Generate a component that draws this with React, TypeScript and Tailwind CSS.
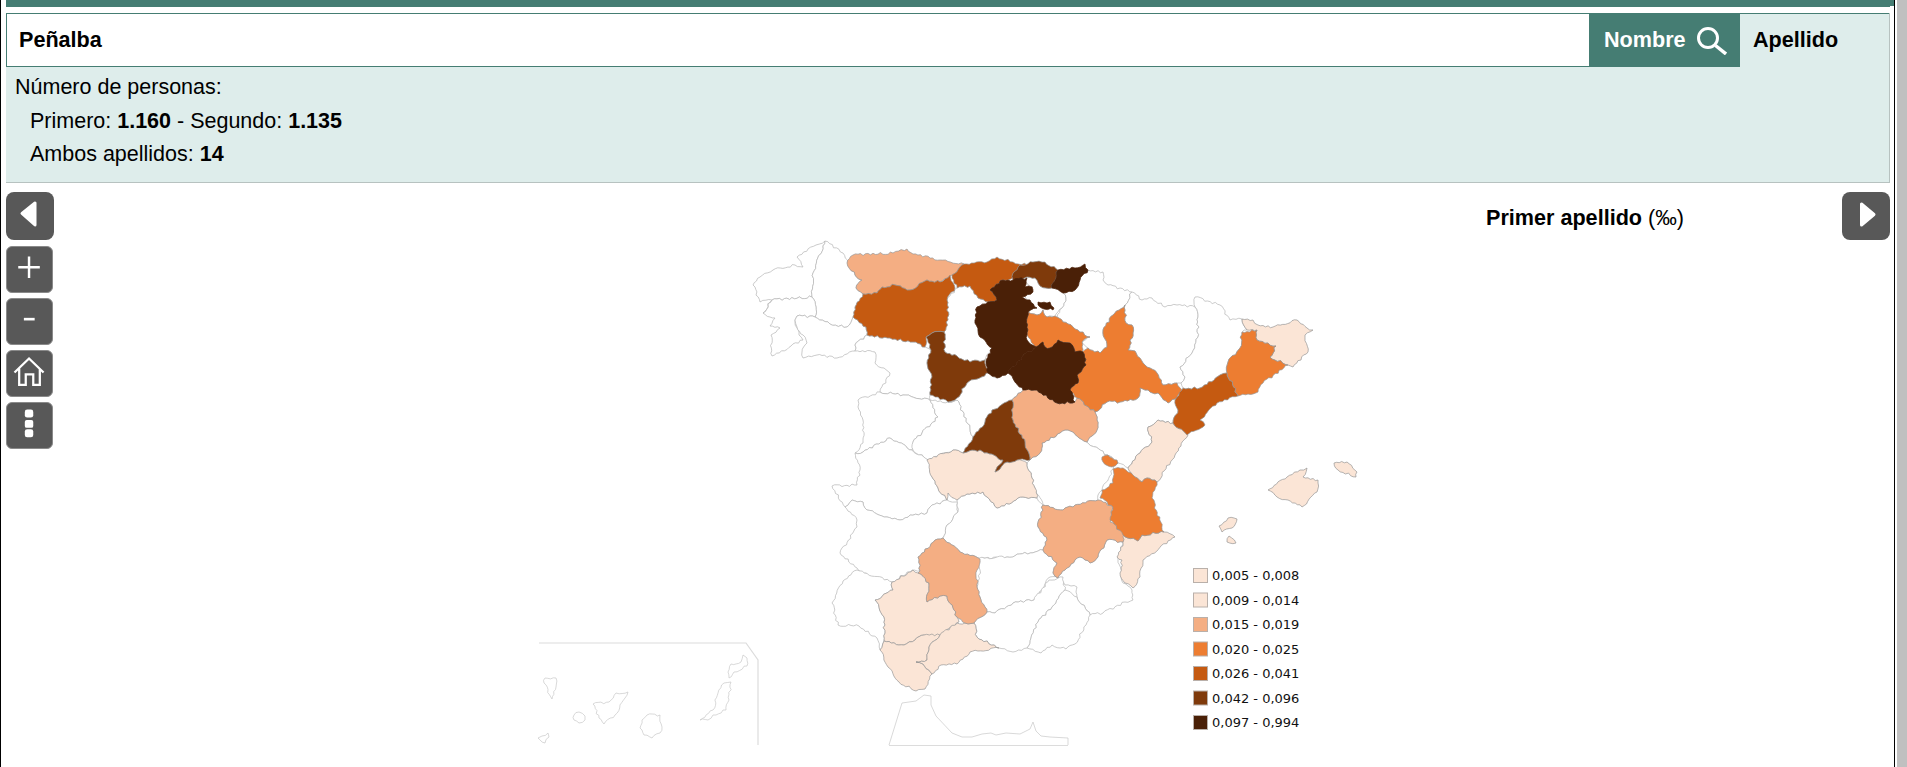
const C1 = "#fbe5d6";
const C3 = "#f4ae83";
const C4 = "#ed7d31";
const C5 = "#c55a11";
const C6 = "#7f3a0b";
const C7 = "#4a2007";
const W = "#ffffff";

const legend = [
  { color: "#fbe5d6", label: "0,005 - 0,008" },
  { color: "#fbe5d6", label: "0,009 - 0,014" },
  { color: C3, label: "0,015 - 0,019" },
  { color: C4, label: "0,020 - 0,025" },
  { color: C5, label: "0,026 - 0,041" },
  { color: C6, label: "0,042 - 0,096" },
  { color: C7, label: "0,097 - 0,994" },
];

// Provinces, traced in page pixels. White ones go first so coloured borders stay on top.
const provinces: [string, string][] = [
  [W, "825,241 816,245 797,257 803,267 795,265 773,270 760,277 753,285 760,302 772,300 763,313 772,300 812,297 813,273"],
  [W, "825,241 843,253 848,263 855,275 862,280 856,288 863,294 855,307 853,317 847,327 830,324 815,317 816,307 812,297 813,273"],
  [W, "812,297 816,307 815,317 797,316 795,320 799,335 803,340 772,356 771,335 780,328 770,326 775,318 770,317 763,313 772,300"],
  [W, "797,316 815,317 830,324 847,327 853,317 866,327 867,335 855,345 855,351 837,358 817,355 803,358 802,352 807,343 803,335 797,327 795,320"],
  [W, "867,335 890,338 913,342 925,347 931,350 927,363 932,377 930,395 930,400 903,395 880,392 890,373 875,363 875,352 855,351 855,345"],
  [W, "858,400 880,392 903,395 930,400 938,417 922,433 913,442 912,450 890,438 863,452 855,453 863,443 863,420 858,407"],
  [W, "957,288 970,286 978,298 988,302 977,307 975,323 980,337 992,348 985,360 970,362 957,356 945,352 944,332 948,320 947,300"],
  [W, "930,400 948,402 957,400 970,428 973,437 963,453 953,450 928,460 913,450 913,442 922,433 938,417"],
  [W, "957,398 967,383 989,373 997,378 1008,373 1023,390 1012,400 992,410 985,422 973,437 970,428 957,400 948,402"],
  [W, "1020,279 1027,277 1035,278 1040,286 1052,288 1063,293 1066,298 1062,308 1055,317 1047,317 1043,310 1037,315 1028,312 1037,308 1030,300 1025,297 1033,287"],
  [W, "1088,270 1103,272 1103,280 1108,285 1132,292 1125,305 1113,315 1103,330 1107,347 1100,353 1088,348 1082,343 1090,337 1073,327 1063,322 1057,317 1062,308 1066,298 1063,293 1075,290 1080,280"],
  [W, "1132,292 1142,300 1152,298 1165,307 1177,305 1195,307 1198,317 1198,337 1192,353 1180,367 1185,377 1181,383 1177,383 1163,385 1157,373 1143,363 1135,351 1128,350 1133,333 1132,325 1126,323 1125,305"],
  [W, "1195,297 1220,305 1230,320 1242,319 1247,330 1242,332 1240,348 1228,362 1227,373 1220,375 1200,388 1183,388 1181,383 1185,377 1180,367 1192,353 1198,337 1198,317 1195,307"],
  [W, "1095,412 1107,402 1120,402 1138,398 1140,388 1148,390 1160,395 1168,403 1177,397 1178,410 1173,423 1158,420 1148,427 1152,442 1140,453 1128,468 1118,463 1107,455 1087,442 1097,430 1097,420"],
  [W, "1027,463 1030,460 1033,457 1040,453 1042,443 1060,433 1068,430 1087,442 1107,455 1118,463 1113,469 1102,490 1098,495 1098,500 1075,505 1063,510 1043,505 1035,488"],
  [W, "855,453 863,452 890,438 912,450 928,460 932,477 938,488 947,500 930,507 927,513 910,515 900,520 887,517 867,510 863,502 852,500 845,507 832,486 857,485 860,470"],
  [W, "845,507 852,500 863,502 867,510 887,517 900,520 910,515 927,513 930,507 947,500 958,502 958,512 947,525 943,538 935,540 918,557 920,571 912,570 892,582 870,577 857,568 840,553 857,527 857,520"],
  [W, "957,500 967,494 983,492 987,497 997,508 1023,497 1037,498 1043,505 1038,527 1047,540 1043,550 1007,557 980,559 960,552 943,538 947,525 958,512"],
  [W, "1058,578 1065,570 1080,557 1090,563 1098,557 1107,540 1123,542 1118,557 1123,583 1132,590 1133,600 1125,602 1103,613 1090,615 1077,597 1077,587 1065,585"],
  [W, "977,558 1007,557 1043,550 1057,563 1053,573 1058,578 1050,577 1034,600 1013,603 995,613 987,612 980,597 977,587 980,570"],
  [W, "857,570 892,582 893,590 875,600 884,617 884,641 880,650 877,638 859,626 838,625 832,603 843,581"],
  [W, "987,612 995,613 1013,603 1034,600 1049,580 1063,577 1065,590 1052,607 1038,622 1031,638 1027,648 1013,652 999,648 977,637 974,623"],
  [W, "1065,590 1077,597 1090,615 1086,625 1075,644 1066,649 1052,645 1041,653 1027,648 1031,638 1038,622 1052,607"],
  [C1, "1242,319 1253,320 1258,325 1273,327 1297,320 1307,328 1313,330 1305,335 1308,352 1293,367 1288,365 1270,357 1276,346 1257,340 1257,330 1247,330"],
  [C1, "1148,427 1158,420 1173,423 1188,435 1175,455 1157,482 1147,478 1142,482 1135,477 1128,468 1140,453 1152,442"],
  [C1, "1123,535 1138,541 1142,535 1164,532 1175,537 1143,560 1140,577 1133,588 1125,583 1120,573 1122,560 1117,557 1123,543"],
  [C1, "927,460 953,450 963,453 967,452 980,450 1003,460 995,472 1007,462 1017,460 1027,463 1035,488 1037,498 1023,497 997,508 987,497 983,492 967,494 957,500 948,493 947,500 938,488 932,477"],
  [C1, "875,600 893,590 892,582 913,570 918,573 929,583 927,602 940,596 947,596 957,617 959,622 945,632 938,638 924,635 915,640 904,645 884,641 884,617"],
  [C1, "884,641 904,645 915,640 924,635 940,635 929,647 927,660 916,662 923,664 932,674 925,689 916,691 899,682 888,667 880,650"],
  [C1, "940,635 957,623 965,623 974,623 977,637 999,648 970,652 957,664 941,665 932,674 923,664 916,662 927,660 929,647"],
  [C1, "1268,490 1287,477 1300,470 1307,468 1303,477 1318,480 1317,492 1302,507 1288,500 1277,497"],
  [C1, "1334,463 1347,462 1357,472 1356,477 1338,470"],
  [C1, "1219,526 1228,518 1237,519 1232,528 1222,532"],
  [C1, "1227,542 1229,536 1236,543"],
  [C3, "853,255 893,253 907,249 913,254 940,260 964,264 952,275 940,282 927,280 910,290 895,285 882,287 877,293 863,294 856,288 862,280 855,275 847,263"],
  [C3, "1012,400 1023,390 1037,390 1057,403 1075,402 1077,398 1095,412 1097,420 1097,430 1087,442 1068,430 1060,433 1042,443 1040,453 1033,457 1030,460 1025,442 1013,420"],
  [C3, "1043,505 1063,510 1075,505 1098,500 1113,507 1110,522 1123,532 1123,542 1107,540 1098,557 1090,563 1080,557 1065,570 1058,578 1053,573 1057,563 1043,550 1047,540 1038,527"],
  [C3, "918,557 935,540 943,538 960,552 980,559 977,570 977,587 980,597 987,612 974,623 965,623 957,617 947,596 940,596 927,602 929,583 918,573 920,571"],
  [C4, "1028,312 1037,315 1043,310 1047,317 1057,317 1063,322 1073,327 1090,337 1082,342 1082,352 1075,352 1070,343 1058,340 1050,348 1045,347 1043,342 1035,347 1027,335"],
  [C4, "1125,305 1126,323 1132,325 1133,333 1128,350 1135,351 1143,363 1157,373 1163,385 1177,383 1182,390 1177,397 1168,403 1160,395 1148,390 1140,388 1138,398 1120,402 1107,402 1095,412 1077,398 1070,390 1078,383 1077,375 1086,365 1083,352 1082,352 1088,348 1100,353 1107,347 1103,330 1113,315"],
  [C4, "1242,332 1257,330 1257,340 1276,346 1270,357 1288,365 1263,383 1258,392 1238,396 1227,373 1228,362 1240,348"],
  [C4, "1113,469 1123,468 1128,472 1135,477 1142,482 1147,478 1157,482 1152,498 1164,532 1142,535 1138,541 1123,535 1110,520 1113,507 1100,498 1102,490 1113,483"],
  [C4, "1102,457 1108,455 1117,460 1118,463 1112,467 1103,462"],
  [C5, "863,294 877,293 882,287 895,285 910,290 927,280 940,282 950,275 955,288 947,300 948,320 944,332 932,333 926,337 925,347 913,342 890,338 867,335 866,327 853,317 855,307"],
  [C5, "952,275 964,264 987,262 997,257 1013,262 1027,265 1017,270 1013,278 1003,280 990,290 997,300 988,302 978,298 970,286 957,288"],
  [C5, "1227,373 1238,396 1217,403 1200,420 1205,425 1187,435 1173,423 1178,410 1175,400 1183,388 1200,388 1220,375"],
  [C6, "926,337 932,333 944,332 945,352 957,356 970,362 985,360 989,373 967,383 957,398 948,402 930,395 932,377 927,363 931,350"],
  [C6, "1012,400 1013,420 1025,442 1030,460 1017,460 1007,462 995,472 1003,460 980,450 967,452 963,453 973,437 985,422 992,410"],
  [C6, "1013,273 1020,265 1033,262 1045,262 1058,270 1053,283 1052,288 1040,286 1035,278 1027,277 1020,279 1013,280"],
  [C7, "1058,270 1075,268 1085,264 1088,270 1080,280 1075,290 1063,293 1052,288 1053,283"],
  [C7, "1003,280 1013,280 1027,278 1025,287 1032,287 1033,292 1022,297 1030,300 1037,308 1028,312 1027,335 1027,340 1036,347 1022,357 1008,373 997,378 988,373 986,362 992,348 980,337 975,323 977,307 988,302 997,300 990,290"],
  [C7, "1036,347 1043,342 1045,347 1050,348 1058,340 1070,343 1075,352 1083,352 1086,365 1077,375 1078,383 1070,390 1075,402 1057,403 1037,390 1023,390 1008,373 1022,357"],
  [C7, "1038,302 1050,302 1054,308 1053,310 1040,307"],
];

// Canary Islands, no fill
const islands = [
  "743,655 747,658 747,666 734,672 729,678 728,672 731,664 741,662",
  "724,683 731,682 729,700 726,710 713,715 708,720 700,720 713,710 718,693",
  "647,715 660,715 662,727 660,733 652,738 644,735 640,728 642,720",
  "593,704 609,702 616,693 628,692 625,698 615,715 604,724 599,718",
  "574,715 579,712 585,716 585,720 579,723 574,720",
  "545,678 556,678 556,687 552,699 544,683",
  "548,733 549,737 545,743 538,738 542,736",
];

// breaks each edge into a jagged line; the same edge always gets the same jags
function jag(points: string) {
  const pts = points.split(" ").map((p) => p.split(",").map(Number));
  let d = "";
  pts.forEach((a, i) => {
    const b = pts[(i + 1) % pts.length];
    d += `${i === 0 ? "M" : "L"}${a[0]} ${a[1]}`;
    const len = Math.hypot(b[0] - a[0], b[1] - a[1]);
    const n = Math.floor(len / 2.5);
    const seed = (a[0] + b[0]) * 13 + (a[1] + b[1]) * 7;
    const swap = a[0] > b[0] || (a[0] === b[0] && a[1] > b[1]);
    for (let k = 1; k < n; k++) {
      const t = k / n;
      const u = swap ? n - k : k;
      const off = Math.sin(seed + u * u * 2.3) * 1.1 * (swap ? -1 : 1);
      const x = a[0] + (b[0] - a[0]) * t - ((b[1] - a[1]) / len) * off;
      const y = a[1] + (b[1] - a[1]) * t + ((b[0] - a[0]) / len) * off;
      d += `L${x.toFixed(1)} ${y.toFixed(1)}`;
    }
  });
  return d + "Z";
}

function SpainMap() {
  return (
    <svg viewBox="530 183 900 584" className="w-[900px] h-[584px] shrink-0 ml-[476px]">
      {provinces.map(([fill, pts], i) => (
        <path
          key={i}
          d={jag(pts)}
          fill={fill}
          stroke={fill === C7 ? "#4a2007" : fill === W ? "#b4b4b4" : "#969696"}
          strokeWidth="0.7"
          strokeLinejoin="round"
        />
      ))}
      {islands.map((pts, i) => (
        <path key={i} d={jag(pts)} fill="#fff" stroke="#c8c8c8" strokeWidth="0.7" />
      ))}
      <path d="M539 643H746L758 660V745" fill="none" stroke="#dcdcdc" strokeWidth="1.2" />
      {/* Ceuta and Melilla box */}
      <path
        d="M889 745L902 703L916 701L924 695L931 696L931 705L936 716L952 733L962 737L972 737L982 734L991 733L996 735L1006 733L1020 734L1030 729L1033 722L1036 731L1041 736L1050 737L1068 738V745"
        fill="none"
        stroke="#c8c8c8"
        strokeWidth="0.7"
      />
      <path d="M889 745.5H1068" stroke="#dcdcdc" strokeWidth="1.2" />
      {legend.map((item, i) => (
        <g key={item.label}>
          <rect
            x="1193.5"
            y={568.5 + i * 24.5}
            width="14"
            height="14"
            fill={item.color}
            stroke="#b9b0aa"
            strokeWidth="1"
          />
          <text x="1212" y={580 + i * 24.5} fontSize="13" fill="#111" className="font-['DejaVu_Sans',sans-serif]">
            {item.label}
          </text>
        </g>
      ))}
    </svg>
  );
}

function ToolButton({ children, big }: { children: React.ReactNode; big?: boolean }) {
  return (
    <button
      className={
        big
          ? "w-[48px] h-[48px] shrink-0 rounded-lg bg-[#585858] block"
          : "w-[47px] h-[47px] shrink-0 rounded-md bg-[#585858] border border-[#8a8a8a] block"
      }
    >
      {children}
    </button>
  );
}

function Glyph({ children }: { children: React.ReactNode }) {
  return (
    <svg viewBox="0 0 48 48" className="w-full h-full block">
      {children}
    </svg>
  );
}

export default function App() {
  return (
    <div className="h-[767px] w-full flex overflow-hidden bg-white font-['Liberation_Sans',Arial,sans-serif] text-black">
      <div className="w-px bg-black shrink-0" />
      <div className="flex-1 min-w-0 pl-[5px]">
        <div className="h-[6px] bg-[#457d73]" />
        <div className="h-px bg-[#457d73] mr-[4px]" />
        <div className="mt-[6px] mr-[4px] h-[170px] bg-[#deedeb] border-r border-b border-[#b7c2c0]">
          <div className="flex h-[54px]">
            <div className="flex-1 flex items-center pl-[12px] bg-white border border-[#457d73] text-[21.6px] font-bold">
              Peñalba
            </div>
            <div className="w-[150px] flex items-center pl-[14px] bg-[#457d73] text-white text-[21.6px] font-bold">
              Nombre
              <svg viewBox="0 0 32 30" className="w-[32px] h-[30px] ml-[9px] shrink-0" fill="none" stroke="#fff">
                <circle cx="13" cy="13" r="9.5" strokeWidth="3" />
                <path d="M20.5 20.5L31 29" strokeWidth="3.4" />
              </svg>
            </div>
            <div className="w-[149px] flex items-center pl-[13px] border-t border-[#457d73] text-[21.6px] font-bold">
              Apellido
            </div>
          </div>
          <div className="pl-[9px] pt-[4px] text-[21.5px] leading-[33.5px]">
            <p>Número de personas:</p>
            <p className="pl-[15px]">
              Primero: <b>1.160</b> - Segundo: <b>1.135</b>
            </p>
            <p className="pl-[15px]">
              Ambos apellidos: <b>14</b>
            </p>
          </div>
        </div>
        <div className="flex mr-[4px]">
          <div className="w-[48px] shrink-0 pt-[9px] flex flex-col gap-[5px]">
            <div className="mb-px">
              <ToolButton big>
                <Glyph>
                  <polygon points="16,21.5 29,11 29,33" fill="#fff" stroke="#fff" strokeWidth="3" strokeLinejoin="round" />
                </Glyph>
              </ToolButton>
            </div>
            <ToolButton>
              <Glyph>
                <path d="M12 21.5H35M23.5 10V33" stroke="#fff" strokeWidth="2.6" fill="none" />
              </Glyph>
            </ToolButton>
            <ToolButton>
              <Glyph>
                <path d="M18 21.5H29.5" stroke="#fff" strokeWidth="2.8" fill="none" />
              </Glyph>
            </ToolButton>
            <ToolButton>
              <Glyph>
                <path
                  d="M8 23L23.5 8L39 23M13 19V36H20V25H28V36H35V19"
                  stroke="#fff"
                  strokeWidth="2.4"
                  fill="none"
                  strokeLinejoin="miter"
                />
              </Glyph>
            </ToolButton>
            <ToolButton>
              <Glyph>
                <rect x="19" y="7" width="9" height="8.5" rx="2.5" fill="#fff" />
                <rect x="19" y="18" width="9" height="8.5" rx="2" fill="#fff" />
                <rect x="19" y="28" width="9" height="8.5" rx="2.5" fill="#fff" />
              </Glyph>
            </ToolButton>
          </div>
          <SpainMap />
          <div className="flex-1 flex justify-between pt-[9px]">
            <div className="ml-[56px] pt-[11px] text-[21.6px] leading-[30px] font-bold">
              Primer apellido <span className="font-normal">(‰)</span>
            </div>
            <ToolButton big>
              <Glyph>
                <polygon points="32,22.5 19.5,12 19.5,33" fill="#fff" stroke="#fff" strokeWidth="3" strokeLinejoin="round" />
              </Glyph>
            </ToolButton>
          </div>
        </div>
      </div>
      <div className="w-px bg-black shrink-0" />
      <div className="w-[2px] bg-white shrink-0" />
      <div className="w-[10px] bg-[#c0c0c0] shrink-0" />
    </div>
  );
}
